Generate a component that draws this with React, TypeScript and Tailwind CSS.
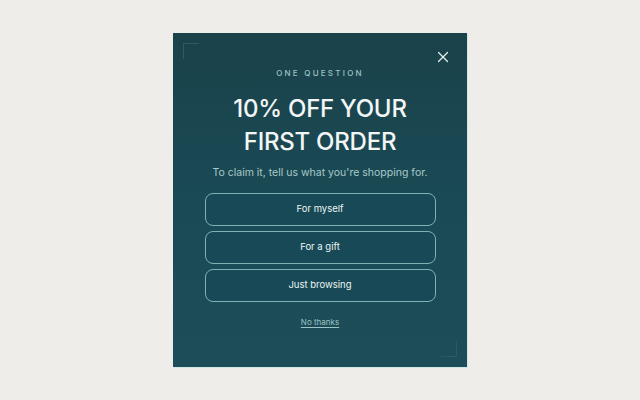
import { X } from 'lucide-react'

const options = ['For myself', 'For a gift', 'Just browsing']

const App = () => {
  return (
    <div
      className="flex h-[400px] w-[640px] items-center justify-center bg-[#efede9]"
      style={{ fontFamily: 'Inter, "Noto Sans", sans-serif' }}
    >
      <div className="relative flex h-[334px] w-[294px] flex-col items-center bg-gradient-to-b from-[#1a424a] via-[#1a4a55] to-[#1c4d58] pt-[34px] shadow-[1px_1px_0_#cfe8e6]">
        {/* corner marks */}
        <div className="absolute top-[10px] left-[10px] h-4 w-4 border-t border-l border-[#2f5a61]" />
        <div className="absolute right-[10px] bottom-[10px] h-4 w-4 border-r border-b border-[#2f5a61]" />

        <button className="absolute top-[15px] right-[15px] text-[#e6f0ef]">
          <X size={18} strokeWidth={1.6} />
        </button>

        <div className="text-[8px] leading-[12px] font-medium tracking-[0.28em] text-[#9cc3c3]">
          ONE QUESTION
        </div>

        <h1 className="mt-[13px] text-center text-[24px] leading-[33px] font-medium tracking-[-0.01em] text-[#f3f6f5]">
          10% OFF YOUR
          <br />
          FIRST ORDER
        </h1>

        <p className="mt-[7px] text-[10.5px] leading-4 text-[#a9c8ca]">
          To claim it, tell us what you're shopping for.
        </p>

        <div className="mt-[12px] flex w-[231px] flex-col gap-[5px]">
          {options.map(option => (
            <button
              key={option}
              className="h-[33px] rounded-[8px] border border-[#7fb2b4] bg-[#174a56] text-[9.5px] text-[#eef4f3]"
            >
              {option}
            </button>
          ))}
        </div>

        <a className="mt-[14px] text-[8px] leading-3 text-[#9cc3c5] underline underline-offset-2">No thanks</a>
      </div>
    </div>
  )
}

export default App
